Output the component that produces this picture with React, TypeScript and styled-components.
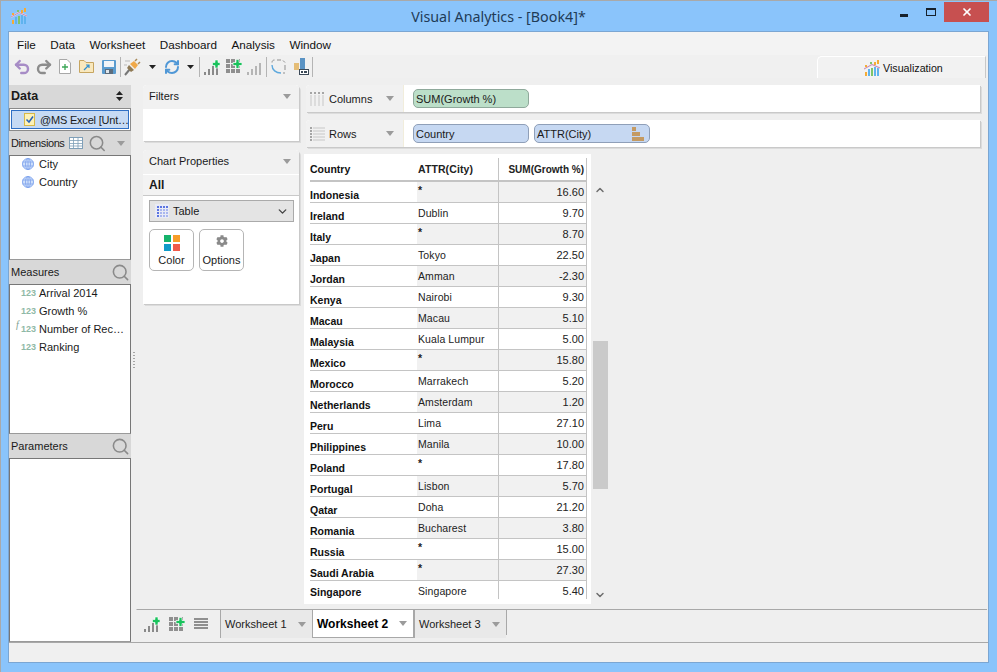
import { ReactNode } from "react";
import styled, { createGlobalStyle } from "styled-components";
import { Undo2, Redo2, RefreshCw, Search, ChevronUp, ChevronDown, X } from "lucide-react";
import { FaCog } from "react-icons/fa";

const GlobalStyle = createGlobalStyle`
    html, body { margin: 0; padding: 0; background: #8ac4fb; }
    * { box-sizing: border-box; }
    body { font-family: "Liberation Sans", Arial, sans-serif; font-size: 11px; color: #1a1a1a; }
`;

const rows = [
    ["Indonesia", "*", "16.60"],
    ["Ireland", "Dublin", "9.70"],
    ["Italy", "*", "8.70"],
    ["Japan", "Tokyo", "22.50"],
    ["Jordan", "Amman", "-2.30"],
    ["Kenya", "Nairobi", "9.30"],
    ["Macau", "Macau", "5.10"],
    ["Malaysia", "Kuala Lumpur", "5.00"],
    ["Mexico", "*", "15.80"],
    ["Morocco", "Marrakech", "5.20"],
    ["Netherlands", "Amsterdam", "1.20"],
    ["Peru", "Lima", "27.10"],
    ["Philippines", "Manila", "10.00"],
    ["Poland", "*", "17.80"],
    ["Portugal", "Lisbon", "5.70"],
    ["Qatar", "Doha", "21.20"],
    ["Romania", "Bucharest", "3.80"],
    ["Russia", "*", "15.00"],
    ["Saudi Arabia", "*", "27.30"],
    ["Singapore", "Singapore", "5.40"],
];

const Window = styled.div`
    width: 997px;
    height: 672px;
    display: flex;
    flex-direction: column;
    overflow: hidden;
    background: #8ac4fb;
    border-top: 1px solid #a9a9a9;
    border-left: 1px solid #a9a9a9;
`;

const TitleBar = styled.div`
    height: 30px;
    flex: none;
    position: relative;
    display: flex;
    align-items: center;
    justify-content: center;
    font-family: "Noto Sans", sans-serif;
    font-size: 14.3px;
    color: #1f3b57;
    padding-right: 1px;
`;

const TitleLogo = styled.div`
    position: absolute;
    left: 10px;
    top: 7px;
    display: flex;
`;

const WindowButtons = styled.div`
    position: absolute;
    right: 8px;
    top: 1px;
    display: flex;
    align-items: center;
`;

const WinButton = styled.div<{ $w: number; $close?: boolean }>`
    width: ${(p) => p.$w}px;
    height: 20px;
    display: flex;
    align-items: center;
    justify-content: center;
    color: #fff;
    background: ${(p) => (p.$close ? "#c75050" : "transparent")};
`;

const MinGlyph = styled.div`
    width: 8px;
    height: 3px;
    margin-top: 6px;
    background: #16212c;
`;

const MaxGlyph = styled.div`
    width: 10px;
    height: 8px;
    border: 1px solid #16212c;
    border-top-width: 2px;
`;

const Client = styled.div`
    width: 981px;
    margin-left: 7px;
    height: 632px;
    flex: none;
    display: flex;
    flex-direction: column;
    border: 1px solid #7ba6d2;
    background: #efefef;
`;

const MenuBar = styled.div`
    height: 23px;
    flex: none;
    display: flex;
    align-items: center;
    gap: 14.5px;
    padding: 2px 0 0 8px;
    background: #f3f3f3;
    font-size: 11.7px;
    color: #111;
`;

const Toolbar = styled.div`
    height: 23px;
    flex: none;
    display: flex;
    align-items: center;
    padding-left: 1.5px;
    background: #f0f0f0;
    position: relative;
`;

const Slot = styled.div<{ $w: number }>`
    width: ${(p) => p.$w}px;
    height: 100%;
    flex: none;
    display: flex;
    align-items: center;
    justify-content: center;
`;

const ToolSep = styled.div`
    width: 1px;
    height: 20px;
    flex: none;
    background: #b4b4b4;
`;

const VizTab = styled.div`
    margin-left: auto;
    margin-right: 2px;
    width: 169px;
    height: 22px;
    align-self: flex-end;
    display: flex;
    align-items: center;
    gap: 3px;
    padding: 1px 0 0 46px;
    font-size: 10.7px;
    color: #111;
    background: #f2f2f2;
    border-top: 1px solid #fff;
    border-left: 1px solid #fff;
    border-right: 1px solid #c8c8c8;
    border-top-left-radius: 5px;
`;

const Main = styled.div`
    flex: 1;
    min-height: 0;
    display: flex;
`;

const LeftPanel = styled.div`
    width: 122px;
    flex: none;
    margin-top: 7px;
    display: flex;
    flex-direction: column;
`;

const DataHeader = styled.div`
    height: 23px;
    flex: none;
    display: flex;
    align-items: center;
    justify-content: space-between;
    padding: 0 8px 1px 2px;
    background: #d8d8d8;
    font-weight: 700;
    font-size: 12.5px;
`;

const SourceRow = styled.div`
    height: 23px;
    flex: none;
    border: 1px solid #8a8a8a;
    background: #fff;
    padding: 1px;
`;

const SourceInner = styled.div`
    height: 100%;
    display: flex;
    align-items: center;
    gap: 5px;
    padding-left: 12px;
    background: #c6daf4;
    border: 1px solid #2f6fc4;
    font-size: 11px;
    letter-spacing: -0.2px;
    white-space: nowrap;
`;

const SectionHeader = styled.div<{ $pr: number }>`
    height: 24px;
    flex: none;
    display: flex;
    align-items: center;
    padding: 0 ${(p) => p.$pr}px 0 2px;
    gap: 5px;
    background: #d8d8d8;
    font-size: 11px;
`;

const DimLabel = styled.span`
    letter-spacing: -0.4px;
    white-space: nowrap;
`;

const HeaderLabel = styled.span`
    flex: 1;
    white-space: nowrap;
`;

const FieldList = styled.div<{ $h?: number }>`
    flex: ${(p) => (p.$h ? "none" : "1")};
    height: ${(p) => (p.$h ? `${p.$h}px` : "auto")};
    background: #fff;
    border: 1px solid #777;
    border-bottom-color: #9a9a9a;
`;

const Field = styled.div`
    height: 18px;
    display: flex;
    align-items: center;
    position: relative;
    padding: 0 2px 3px 12px;
    font-size: 11px;
    gap: 5px;
    white-space: nowrap;
`;

const NumTag = styled.span`
    width: 14px;
    flex: none;
    margin: 0 -1px;
    font-size: 9px;
    font-weight: 700;
    color: #8fb9a6;
`;

const FxTag = styled.span`
    position: absolute;
    left: 6px;
    top: -2px;
    font: italic 10px "Liberation Serif", serif;
    color: #7f9f90;
`;

const Splitter = styled.div`
    width: 5px;
    flex: none;
    display: flex;
    align-items: center;
    justify-content: center;
`;

const Grip = styled.div`
    width: 2px;
    height: 18px;
    background-image: radial-gradient(#a5a5a5 0.7px, transparent 0.8px);
    background-size: 2px 3px;
`;

const CenterPane = styled.div`
    flex: 1;
    min-width: 0;
    display: flex;
    flex-direction: column;
`;

const Workspace = styled.div`
    flex: 1;
    min-height: 0;
    display: flex;
    padding: 7px 0 0 6px;
    gap: 6px;
    border-left: 1px solid #efefef;
    border-bottom: 1px solid #a8a8a8;
    margin-right: 1px;
`;

const CardColumn = styled.div`
    width: 156px;
    flex: none;
    display: flex;
    flex-direction: column;
    gap: 9px;
`;

const Card = styled.div<{ $h: number }>`
    height: ${(p) => p.$h}px;
    background: #fff;
    border-top-left-radius: 4px;
    border-top-right-radius: 4px;
    box-shadow: 1px 1px 0 #c9c9c9, 2px 2px 0 #dcdcdc;
`;

const CardHeader = styled.div`
    height: 24px;
    display: flex;
    align-items: center;
    justify-content: space-between;
    padding: 0 8px 2px 6px;
    background: #f1f1f1;
    font-size: 11px;
    border-top-left-radius: 4px;
    border-top-right-radius: 4px;
`;

const Caret = styled.span`
    width: 0;
    height: 0;
    flex: none;
    border-left: 4.5px solid transparent;
    border-right: 4.5px solid transparent;
    border-top: 5px solid #9b9b9b;
`;

const AllRow = styled.div`
    height: 22px;
    display: flex;
    align-items: center;
    padding-left: 6px;
    font-weight: 700;
    font-size: 12px;
    background: #f3f3f3;
    border-top: 1px solid #fff;
    border-bottom: 1px solid #c9c9c9;
`;

const TypeSelect = styled.div`
    margin: 4px 5px 0 6px;
    height: 22px;
    display: flex;
    align-items: center;
    gap: 4px;
    padding: 0 4px 0 5px;
    background: #e4e4e4;
    border: 1px solid #aaa;
    font-size: 11px;
`;

const OptionRow = styled.div`
    display: flex;
    gap: 5px;
    margin: 7px 0 0 6px;
`;

const OptionButton = styled.div`
    width: 45px;
    height: 42px;
    display: flex;
    flex-direction: column;
    align-items: center;
    justify-content: flex-end;
    gap: 3px;
    padding-bottom: 4px;
    background: #fff;
    border: 1px solid #b5b5b5;
    border-radius: 5px;
    font-size: 11px;
`;

const GearSlot = styled.div`
    height: 16px;
    display: flex;
    align-items: flex-start;
`;

const ShelfColumn = styled.div`
    flex: 1;
    min-width: 0;
    display: flex;
    flex-direction: column;
`;

const Shelf = styled.div`
    height: 27px;
    flex: none;
    display: flex;
    margin: 0 7px 8px 1px;
    background: #fff;
    border-top-left-radius: 4px;
    box-shadow: 1px 1px 0 #c9c9c9, 2px 2px 0 #dcdcdc;
`;

const ShelfLabel = styled.div`
    width: 98px;
    flex: none;
    display: flex;
    align-items: center;
    padding: 0 9px 0 4px;
    gap: 4px;
    background: #f1f1f1;
    border-right: 1px solid #f1eddc;
    font-size: 11px;
    border-top-left-radius: 4px;
`;

const ShelfBody = styled.div`
    flex: 1;
    display: flex;
    align-items: center;
    gap: 5px;
    padding: 0 0 0 9px;
`;

const Pill = styled.div<{ $kind: "measure" | "dim" }>`
    width: 116px;
    height: 19px;
    display: flex;
    align-items: center;
    justify-content: space-between;
    padding: 0 4px 0 2px;
    font-size: 11px;
    border-radius: 5px;
    background: ${(p) => (p.$kind === "measure" ? "#bcdfc9" : "#c6d8f2")};
    border: 1px solid ${(p) => (p.$kind === "measure" ? "#8fa99b" : "#8f9fb8")};
`;

const TableArea = styled.div`
    flex: 1;
    min-height: 0;
    display: flex;
    margin-top: -1px;
`;

const TableSheet = styled.div`
    width: 287px;
    height: 450px;
    flex: none;
    background: #fff;
    padding: 4px 0 0 6px;
    margin-left: -1px;
`;

const Row = styled.div<{ $header?: boolean }>`
    width: 277px;
    height: ${(p) => (p.$header ? 24 : 21)}px;
    display: grid;
    grid-template-columns: 107px 82px 88px;
    border-bottom: ${(p) => (p.$header ? "2px solid #c4c4c4" : "1px solid #c4c4c4")};
    &:last-child { border-bottom: none; height: 18px; }
`;

const CountryCell = styled.div<{ $header?: boolean }>`
    font-size: 10.5px;
    font-weight: 700;
    display: flex;
    align-items: ${(p) => (p.$header ? "center" : "flex-end")};
    padding-bottom: ${(p) => (p.$header ? 0 : 1)}px;
    color: #111;
    white-space: nowrap;
`;

const CityCell = styled.div<{ $shade?: boolean; $header?: boolean }>`
    font-size: 10.5px;
    font-weight: ${(p) => (p.$header ? 700 : 400)};
    display: flex;
    align-items: ${(p) => (p.$header ? "center" : "flex-start")};
    padding-top: ${(p) => (p.$header ? 0 : 4)}px;
    padding-left: 1px;
    background: ${(p) => (p.$shade ? "#f1f1f1" : "#fff")};
    border-right: 1px solid #c4c4c4;
    color: #222;
    letter-spacing: 0.1px;
    white-space: nowrap;
`;

const ValueCell = styled(CityCell)`
    justify-content: flex-end;
    padding-right: 2px;
    font-size: ${(p) => (p.$header ? 10 : 11)}px;
    letter-spacing: 0;
`;

const Star = styled.span`
    margin-top: -2px;
    font-weight: 700;
`;

const ScrollBar = styled.div`
    width: 16px;
    flex: none;
    margin-left: 1px;
    display: flex;
    flex-direction: column;
    align-items: center;
    padding-top: 30px;
    height: 450px;
    color: #6e6e6e;
`;

const ScrollThumb = styled.div`
    width: 15px;
    height: 148px;
    margin-top: 145px;
    margin-bottom: 100px;
    background: #cacaca;
`;

const TabBar = styled.div`
    height: 32px;
    flex: none;
    display: flex;
    align-items: flex-start;
`;

const TabIcons = styled.div`
    width: 84px;
    height: 28px;
    flex: none;
    display: flex;
    align-items: center;
    gap: 9px;
    padding-left: 8px;
`;

const Tab = styled.div<{ $active?: boolean; $w: number }>`
    width: ${(p) => p.$w}px;
    height: 28px;
    flex: none;
    display: flex;
    align-items: center;
    justify-content: space-between;
    padding: 0 6px 0 4px;
    font-size: ${(p) => (p.$active ? 12 : 11)}px;
    font-weight: ${(p) => (p.$active ? 700 : 400)};
    background: ${(p) => (p.$active ? "#fff" : "#e9e9e9")};
    border-left: 1px solid #a8a8a8;
    border-bottom: ${(p) => (p.$active ? "1px solid #a8a8a8" : "none")};
    border-right: ${(p) => (p.$active ? "1px solid #a8a8a8" : "none")};
    color: ${(p) => (p.$active ? "#000" : "#222")};
`;

const TabEnd = styled.div`
    width: 1px;
    height: 25px;
    flex: none;
    background: #a8a8a8;
`;

const StatusBar = styled.div`
    height: 20px;
    flex: none;
    background: #f0f0f0;
    border-top: 1px solid #a8a8a8;
`;

const Glyph = styled.svg`
    display: block;
    flex: none;
`;

function Icon({ w, h, children }: { w: number; h: number; children: ReactNode }) {
    return <Glyph width={w} height={h} viewBox={`0 0 ${w} ${h}`}>{children}</Glyph>;
}

function AppLogo({ size }: { size: number }) {
    return (
        <Glyph width={size} height={size} viewBox="0 0 16 16">
            <rect x="4" y="9" width="2" height="7" fill="#5fb3ee" />
            <rect x="7" y="8" width="2" height="8" fill="#7fc46a" />
            <rect x="10" y="7" width="2" height="9" fill="#5fb3ee" />
            <rect x="13" y="8" width="2" height="8" fill="#5fb3ee" />
            <path d="M0 9 L8 4.5 L16 8" stroke="#e2e2ee" strokeWidth="1.8" fill="none" />
            <path d="M0 9 L8 4.5 L16 8" stroke="#cf86ad" strokeWidth="1" fill="none" />
            <rect x="1" y="12" width="2" height="4" fill="#f5ac35" />
            <rect x="1" y="5" width="2" height="2" fill="#f5ac35" />
            <rect x="6" y="2" width="2" height="2" fill="#7fc46a" />
            <rect x="10" y="2" width="2" height="3" fill="#f5ac35" />
            <rect x="13" y="0" width="2" height="4" fill="#f5ac35" />
        </Glyph>
    );
}

function NewFile() {
    return (
        <Icon w={12} h={15}>
            <path d="M.5.5H8L11.5 4V14.5H.5Z" fill="#fff" stroke="#a8a8a8" />
            <path d="M6 5V11M3 8H9" stroke="#3aa655" strokeWidth="1.3" />
        </Icon>
    );
}

function OpenFolder() {
    return (
        <Icon w={15} h={13}>
            <path d="M.5 12.5V.5H5L7 2.5H14.5V12.5Z" fill="#f9e8bd" stroke="#c6a560" />
            <path d="M5 10L10 5M7 5H10V8" stroke="#2f8fd0" strokeWidth="1.2" fill="none" />
        </Icon>
    );
}

function SaveDisk() {
    return (
        <Icon w={14} h={14}>
            <rect width="14" height="14" rx="1" fill="#5b9ccf" />
            <rect x="2" y="1" width="10" height="6" fill="#f2f5f8" />
            <rect x="3" y="9" width="8" height="5" fill="#5d6d7c" />
            <rect x="4" y="10" width="3" height="3" fill="#dfe6ec" />
        </Icon>
    );
}

function Plug() {
    return (
        <Icon w={17} h={18}>
            <path d="M1 17L6 11" stroke="#777" strokeWidth="2" />
            <path d="M5 7L10 12L7 14L3 10Z" fill="#8f7a55" />
            <path d="M6 6L10 3L14 7L11 11Z" fill="#f0a94a" />
            <path d="M11 3L13 1M14 6L16 4" stroke="#a88a5a" strokeWidth="1.5" />
            <path d="M1 3H6M0 7H3" stroke="#b9b9b9" strokeWidth="1" />
        </Icon>
    );
}

function BarsPlus({ plus = true, shade = "#8a8a8a" }: { plus?: boolean; shade?: string }) {
    return (
        <Icon w={16} h={16}>
            <rect x="0" y="13" width="2" height="3" fill={shade} />
            <rect x="4" y="10" width="2" height="6" fill={shade} />
            <rect x="8" y="7" width="2" height="9" fill={shade} />
            <rect x="12" y="4" width="2" height="12" fill={shade} />
            {plus && <path d="M8.5 3.5H11V1H14V3.5H16V6.5H14V9H11V6.5H8.5Z" fill="#19c25c" stroke="#fff" strokeWidth=".6" />}
        </Icon>
    );
}

function GridPlus() {
    return (
        <Icon w={16} h={15}>
            {[0, 5, 10].map((y) =>
                [0, 5, 10].map((x) => <rect key={`${x}${y}`} x={x} y={y} width="4" height="4" fill="#8f8f8f" />)
            )}
            <path d="M7 3.5H10V.5H13V3.5H16V6.5H13V9.5H10V6.5H7Z" fill="#19c25c" stroke="#fff" strokeWidth=".7" />
        </Icon>
    );
}

function CycleChart() {
    return (
        <Icon w={15} h={15}>
            <path d="M1 3.5C1 2 2 1 3.5 1M6 1H10M12 1.5L14 3.5" stroke="#8f8f8f" fill="none" />
            <path d="M1 6C1 11 5 14 10 14" stroke="#5fa9dd" strokeWidth="1.4" fill="none" />
            <path d="M14 6V11M12 14H14" stroke="#8f8f8f" fill="none" />
        </Icon>
    );
}

function BarLo() {
    return (
        <Icon w={15} h={17}>
            <rect x="0" y="5" width="5" height="7" fill="#e5bd76" />
            <rect x="6" y="0" width="5" height="11" fill="#5a93c4" />
            <rect x="5.5" y="11.5" width="9" height="5" fill="#fff" stroke="#3c4a58" />
            <rect x="7" y="13" width="2" height="2" fill="#3c4a58" />
            <rect x="10" y="13" width="3" height="2" fill="#3c4a58" />
        </Icon>
    );
}

function SmallCaret() {
    return (
        <Icon w={7} h={4}>
            <path d="M0 0H7L3.5 4Z" fill="#222" />
        </Icon>
    );
}

function SortArrows() {
    return (
        <Icon w={7} h={10}>
            <path d="M3.5 0L7 4H0ZM3.5 10L0 6H7Z" fill="#222" />
        </Icon>
    );
}

function CheckDoc() {
    return (
        <Icon w={11} h={13}>
            <rect x=".5" y=".5" width="10" height="12" fill="#fdf2b8" stroke="#d9b948" />
            <path d="M2.5 6.5L5 9L9 3.5" stroke="#2a63b8" strokeWidth="1.5" fill="none" />
        </Icon>
    );
}

function TableGrid() {
    return (
        <Icon w={14} h={12}>
            <rect x=".5" y=".5" width="13" height="11" fill="#fff" stroke="#7f9fb8" />
            <path d="M.5 3.5H13.5M.5 6.5H13.5M.5 9H13.5M4.5.5V11.5M9 .5V11.5" stroke="#7f9fb8" strokeWidth=".8" />
        </Icon>
    );
}

function Globe() {
    return (
        <Icon w={12} h={12}>
            <circle cx="6" cy="6" r="5.5" fill="#cfe0fa" stroke="#86aaf0" />
            <ellipse cx="6" cy="6" rx="2.5" ry="5.5" fill="none" stroke="#7da2ec" strokeWidth=".8" />
            <path d="M.5 4H11.5M.5 8H11.5M6 .5V11.5" stroke="#7da2ec" strokeWidth=".8" />
        </Icon>
    );
}

function DotTable() {
    return (
        <Icon w={14} h={14}>
            <rect width="14" height="14" fill="#e9ebf6" />
            {[1, 4, 7, 10].map((y) =>
                [1, 4, 7, 10].map((x) => (
                    <rect key={`${x}${y}`} x={x + 1} y={y + 1} width="2" height="2" fill={x === 1 || y === 1 ? "#5b74e0" : "#a9b6ef"} />
                ))
            )}
        </Icon>
    );
}

function ColorSquares() {
    return (
        <Icon w={16} h={16}>
            <rect width="7" height="7" fill="#16b36b" />
            <rect x="9" width="7" height="7" fill="#f79d29" />
            <rect y="9" width="7" height="7" fill="#0f9bc9" />
            <rect x="9" y="9" width="7" height="7" fill="#f05a4a" />
        </Icon>
    );
}

function ColumnsGlyph() {
    return (
        <Icon w={15} h={14}>
            {[0, 4, 8, 12].map((x) => (
                <g key={x}>
                    <rect x={x} y="0" width="2" height="2" fill="#a5a5a5" />
                    <rect x={x} y="3" width="2" height="11" fill="#dcdcdc" />
                </g>
            ))}
        </Icon>
    );
}

function RowsGlyph() {
    return (
        <Icon w={15} h={14}>
            {[0, 3, 6, 9, 12].map((y) => (
                <g key={y}>
                    <rect x="0" y={y} width="2" height="2" fill="#a5a5a5" />
                    <rect x="3" y={y} width="12" height="2" fill="#dcdcdc" />
                </g>
            ))}
        </Icon>
    );
}

function SortBars() {
    return (
        <Icon w={13} h={14}>
            <rect x="0" y="0" width="4" height="4" fill="#c49a62" />
            <rect x="0" y="5" width="8" height="4" fill="#c49a62" />
            <rect x="0" y="10" width="12" height="4" fill="#c49a62" />
        </Icon>
    );
}

function ListLines() {
    return (
        <Icon w={14} h={12}>
            {[0, 3, 6, 9].map((y) => <rect key={y} y={y} width="14" height="2" fill="#8f8f8f" />)}
        </Icon>
    );
}

export default function App() {
    return (
        <>
            <GlobalStyle />
            <Window>
                <TitleBar>
                    <TitleLogo><AppLogo size={16} /></TitleLogo>
                    Visual Analytics - [Book4]*
                    <WindowButtons>
                        <WinButton $w={26}><MinGlyph /></WinButton>
                        <WinButton $w={27}><MaxGlyph /></WinButton>
                        <WinButton $w={45} $close><X size={12} strokeWidth={3.5} /></WinButton>
                    </WindowButtons>
                </TitleBar>
                <Client>
                    <MenuBar>
                        <span>File</span>
                        <span>Data</span>
                        <span>Worksheet</span>
                        <span>Dashboard</span>
                        <span>Analysis</span>
                        <span>Window</span>
                    </MenuBar>
                    <Toolbar>
                        <Slot $w={22}><Undo2 size={18} color="#a78cc6" strokeWidth={3.2} /></Slot>
                        <Slot $w={22}><Redo2 size={18} color="#8c8c8c" strokeWidth={3.2} /></Slot>
                        <Slot $w={21}><NewFile /></Slot>
                        <Slot $w={22}><OpenFolder /></Slot>
                        <Slot $w={22}><SaveDisk /></Slot>
                        <ToolSep />
                        <Slot $w={24}><Plug /></Slot>
                        <Slot $w={16}><SmallCaret /></Slot>
                        <Slot $w={22}><RefreshCw size={16} color="#4f97d6" strokeWidth={3} /></Slot>
                        <Slot $w={16}><SmallCaret /></Slot>
                        <ToolSep />
                        <Slot $w={24}><BarsPlus /></Slot>
                        <Slot $w={20}><GridPlus /></Slot>
                        <Slot $w={22}><BarsPlus plus={false} shade="#b5b5b5" /></Slot>
                        <ToolSep />
                        <Slot $w={24}><CycleChart /></Slot>
                        <Slot $w={21}><BarLo /></Slot>
                        <ToolSep />
                        <VizTab><AppLogo size={16} />Visualization</VizTab>
                    </Toolbar>
                    <Main>
                        <LeftPanel>
                            <DataHeader>Data<SortArrows /></DataHeader>
                            <SourceRow>
                                <SourceInner><CheckDoc />@MS Excel [Unt…</SourceInner>
                            </SourceRow>
                            <SectionHeader $pr={6}>
                                <DimLabel>Dimensions</DimLabel>
                                <TableGrid />
                                <Search size={19} color="#8a8a8a" strokeWidth={2} />
                                <HeaderLabel />
                                <Caret />
                            </SectionHeader>
                            <FieldList $h={105}>
                                <Field><Globe />City</Field>
                                <Field><Globe />Country</Field>
                            </FieldList>
                            <SectionHeader $pr={1}>
                                <HeaderLabel>Measures</HeaderLabel>
                                <Search size={19} color="#8a8a8a" strokeWidth={2} />
                            </SectionHeader>
                            <FieldList $h={150}>
                                <Field><NumTag>123</NumTag>Arrival 2014</Field>
                                <Field><NumTag>123</NumTag>Growth %</Field>
                                <Field><FxTag>f</FxTag><NumTag>123</NumTag>Number of Rec…</Field>
                                <Field><NumTag>123</NumTag>Ranking</Field>
                            </FieldList>
                            <SectionHeader $pr={1}>
                                <HeaderLabel>Parameters</HeaderLabel>
                                <Search size={19} color="#8a8a8a" strokeWidth={2} />
                            </SectionHeader>
                            <FieldList />
                        </LeftPanel>
                        <Splitter><Grip /></Splitter>
                        <CenterPane>
                            <Workspace>
                                <CardColumn>
                                    <Card $h={56}>
                                        <CardHeader>Filters<Caret /></CardHeader>
                                    </Card>
                                    <Card $h={154}>
                                        <CardHeader>Chart Properties<Caret /></CardHeader>
                                        <AllRow>All</AllRow>
                                        <TypeSelect>
                                            <DotTable />
                                            <HeaderLabel>Table</HeaderLabel>
                                            <ChevronDown size={13} color="#444" strokeWidth={2.5} />
                                        </TypeSelect>
                                        <OptionRow>
                                            <OptionButton><ColorSquares />Color</OptionButton>
                                            <OptionButton><GearSlot><FaCog size={12} color="#8a8a8a" /></GearSlot>Options</OptionButton>
                                        </OptionRow>
                                    </Card>
                                </CardColumn>
                                <ShelfColumn>
                                    <Shelf>
                                        <ShelfLabel><ColumnsGlyph /><HeaderLabel>Columns</HeaderLabel><Caret /></ShelfLabel>
                                        <ShelfBody><Pill $kind="measure">SUM(Growth %)</Pill></ShelfBody>
                                    </Shelf>
                                    <Shelf>
                                        <ShelfLabel><RowsGlyph /><HeaderLabel>Rows</HeaderLabel><Caret /></ShelfLabel>
                                        <ShelfBody>
                                            <Pill $kind="dim">Country</Pill>
                                            <Pill $kind="dim">ATTR(City)<SortBars /></Pill>
                                        </ShelfBody>
                                    </Shelf>
                                    <TableArea>
                                        <TableSheet>
                                            <Row $header>
                                                <CountryCell $header>Country</CountryCell>
                                                <CityCell $header>ATTR(City)</CityCell>
                                                <ValueCell $header>SUM(Growth %)</ValueCell>
                                            </Row>
                                            {rows.map((r, i) => (
                                                <Row key={r[0]}>
                                                    <CountryCell>{r[0]}</CountryCell>
                                                    <CityCell $shade={i % 2 === 0}>{r[1] === "*" ? <Star>*</Star> : r[1]}</CityCell>
                                                    <ValueCell $shade={i % 2 === 0}>{r[2]}</ValueCell>
                                                </Row>
                                            ))}
                                        </TableSheet>
                                        <ScrollBar>
                                            <ChevronUp size={12} strokeWidth={3} />
                                            <ScrollThumb />
                                            <ChevronDown size={12} strokeWidth={3} />
                                        </ScrollBar>
                                    </TableArea>
                                </ShelfColumn>
                            </Workspace>
                            <TabBar>
                                <TabIcons>
                                    <BarsPlus />
                                    <GridPlus />
                                    <ListLines />
                                </TabIcons>
                                <Tab $w={92}>Worksheet 1<Caret /></Tab>
                                <Tab $w={102} $active>Worksheet 2<Caret /></Tab>
                                <Tab $w={92}>Worksheet 3<Caret /></Tab>
                                <TabEnd />
                            </TabBar>
                        </CenterPane>
                    </Main>
                    <StatusBar />
                </Client>
            </Window>
        </>
    );
}
